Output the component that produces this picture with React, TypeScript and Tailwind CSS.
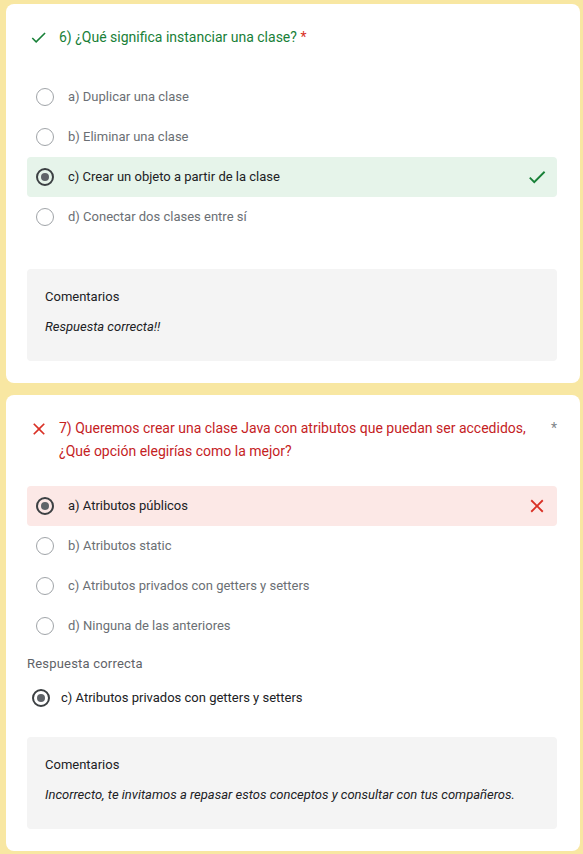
import { FC } from "react";

const CheckIcon: FC<{ className?: string }> = ({ className }) => (
  <svg viewBox="0 0 24 24" className={className} fill="currentColor">
    <path d="M9 16.17L4.83 12l-1.42 1.41L9 19 21 7l-1.41-1.41z" />
  </svg>
);

const CloseIcon: FC<{ className?: string }> = ({ className }) => (
  <svg viewBox="0 0 24 24" className={className} fill="currentColor">
    <path d="M19 6.41L17.59 5 12 10.59 6.41 5 5 6.41 10.59 12 5 17.59 6.41 19 12 13.41 17.59 19 19 17.59 13.41 12z" />
  </svg>
);

const Radio: FC<{ checked?: boolean }> = ({ checked }) =>
  checked ? (
    <span className="flex h-[18px] w-[18px] shrink-0 items-center justify-center rounded-full border-2 border-[#3c4043]">
      <span className="h-[8px] w-[8px] rounded-full bg-[#5f6368]" />
    </span>
  ) : (
    <span className="h-[18px] w-[18px] shrink-0 rounded-full border-[1.5px] border-[#a0a4a8]" />
  );

interface OptionProps {
  label: string;
  state?: "correct" | "wrong";
}

const Option: FC<OptionProps> = ({ label, state }) => {
  const bg =
    state === "correct"
      ? "bg-[#e6f4ea]"
      : state === "wrong"
      ? "bg-[#fce8e6]"
      : "";
  return (
    <div className={`flex h-10 items-center rounded pl-[9px] pr-[9px] ${bg}`}>
      <Radio checked={!!state} />
      <span
        className={`ml-[14px] flex-1 text-[13px] ${
          state ? "text-[#202124]" : "text-[#6b6f74]"
        }`}
      >
        {label}
      </span>
      {state === "correct" && <CheckIcon className="h-[22px] w-[22px] text-[#188038]" />}
      {state === "wrong" && <CloseIcon className="h-[22px] w-[22px] text-[#d93025]" />}
    </div>
  );
};

const Comments: FC<{ text: string; className?: string }> = ({ text, className }) => (
  <div className={`h-[92px] rounded-sm bg-[#f4f4f4] pl-[18px] pt-[19px] ${className ?? ""}`}>
    <div className="text-[13px] leading-[18px] text-[#202124]">Comentarios</div>
    <div className="mt-[12px] text-[13px] italic leading-[18px] text-[#202124]">{text}</div>
  </div>
);

export default function App() {
  return (
    <div
      className="min-h-screen bg-[#f8e7a2] pb-[4px] pl-[6px] pr-[3px] pt-[4px]"
      style={{ fontFamily: "Roboto, 'Liberation Sans', sans-serif" }}
    >
      {/* Question 6 */}
      <section className="rounded-lg bg-white pb-[22px] pl-[21px] pr-[23px] pt-[22px]">
        <div className="flex items-start">
          <div className="flex h-[23px] w-8 shrink-0 items-center pl-[2px]">
            <CheckIcon className="h-[19px] w-[19px] text-[#188038]" />
          </div>
          <h2 className="text-[14px] leading-[23px] text-[#188038]">
            6) ¿Qué significa instanciar una clase? <span className="text-[#d93025]">*</span>
          </h2>
        </div>

        <div className="mt-[28px]">
          <Option label="a) Duplicar una clase" />
          <Option label="b) Eliminar una clase" />
          <Option label="c) Crear un objeto a partir de la clase" state="correct" />
          <Option label="d) Conectar dos clases entre sí" />
        </div>

        <Comments className="mt-[32px]" text="Respuesta correcta!!" />
      </section>

      {/* Question 7 */}
      <section className="mt-[12px] rounded-lg bg-white pb-[22px] pl-[21px] pr-[23px] pt-[22px]">
        <div className="flex items-start">
          <div className="flex h-[23px] w-8 shrink-0 items-center pl-[2px]">
            <CloseIcon className="h-[20px] w-[20px] text-[#d93025]" />
          </div>
          <h2 className="flex-1 pr-6 text-[14px] leading-[23px] text-[#c5221f]">
            7) Queremos crear una clase Java con atributos que puedan ser accedidos, ¿Qué opción
            elegirías como la mejor?
          </h2>
          <span className="text-[14px] leading-[23px] text-[#80868b]">*</span>
        </div>

        <div className="mt-[23px]">
          <Option label="a) Atributos públicos" state="wrong" />
          <Option label="b) Atributos static" />
          <Option label="c) Atributos privados con getters y setters" />
          <Option label="d) Ninguna de las anteriores" />
        </div>

        <div className="mt-[8px] text-[13px] leading-5 tracking-[0.2px] text-[#5f6368]">
          Respuesta correcta
        </div>
        <div className="mt-[4px] flex h-10 items-center pl-[5px]">
          <Radio checked />
          <span className="ml-[11px] text-[13px] text-[#202124]">
            c) Atributos privados con getters y setters
          </span>
        </div>

        <Comments
          className="mt-[19px]"
          text="Incorrecto, te invitamos a repasar estos conceptos y consultar con tus compañeros."
        />
      </section>
    </div>
  );
}
